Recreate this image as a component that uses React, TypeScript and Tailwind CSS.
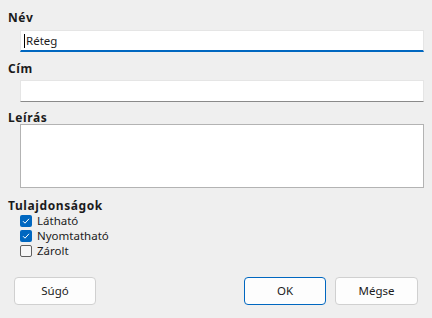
import React from "react";

const Check = ({ checked }: { checked: boolean }) =>
  checked ? (
    <span className="w-[12px] h-[12px] rounded-[2px] bg-[#0067c0] flex items-center justify-center">
      <svg width="8" height="8" viewBox="0 0 8 8" fill="none">
        <path d="M1 4.2 L3 6.2 L7 1.8" stroke="#ffffff" strokeWidth="1" />
      </svg>
    </span>
  ) : (
    <span className="w-[12px] h-[12px] rounded-[2px] border border-[#5f5f5f] bg-[#f7f7f7]" />
  );

export default function App() {
  return (
    <div
      className="w-[432px] h-[318px] bg-[#efefef] text-[#1b1b1b] text-[11.5px] flex flex-col px-[8px] overflow-hidden"
      style={{ fontFamily: '"Noto Sans", sans-serif' }}
    >
      <div className="mt-[12px] h-[12px] leading-[12px] text-[12px] tracking-[0.6px] font-bold">Név</div>
      <div className="mt-[6px] ml-[12px] w-[404px] h-[22px] bg-white border border-[#e5e5e5] border-b-2 border-b-[#0067c0] flex items-center pl-[3px]">
        <span className="w-px h-[14px] bg-black mr-[1px]" />
        <span>Réteg</span>
      </div>
      <div className="mt-[11px] h-[12px] leading-[12px] text-[12px] tracking-[0.6px] font-bold">Cím</div>
      <div className="mt-[5px] ml-[12px] w-[404px] h-[22px] bg-white border border-[#e5e5e5] border-b-[#8a8a8a]" />
      <div className="mt-[10px] h-[12px] leading-[12px] text-[12px] tracking-[0.6px] font-bold">Leírás</div>
      <div className="ml-[12px] w-[404px] h-[64px] bg-white border border-[#b3b3b3]" />
      <div className="mt-[12px] h-[12px] leading-[12px] text-[12px] tracking-[0.6px] font-bold">Tulajdonságok</div>
      <div className="mt-[1px] ml-[12px] flex flex-col">
        {[
          ["Látható", true],
          ["Nyomtatható", true],
          ["Zárolt", false],
        ].map(([label, checked]) => (
          <div key={label as string} className="h-[15px] flex items-center gap-[5px]">
            <Check checked={checked as boolean} />
            <span className="leading-[14px]">{label as string}</span>
          </div>
        ))}
      </div>
      <div className="mt-[19px] flex items-center pl-[6px] pr-[6px]">
        <button className="w-[82px] h-[28px] rounded-[4px] bg-[#fdfdfd] border border-[#d0d0d0]">
          Súgó
        </button>
        <div className="flex-1" />
        <button className="w-[82px] h-[28px] rounded-[4px] bg-[#fdfdfd] border border-[#0067c0]">
          OK
        </button>
        <button className="ml-[9px] w-[83px] h-[28px] rounded-[4px] bg-[#fdfdfd] border border-[#d0d0d0]">
          Mégse
        </button>
      </div>
    </div>
  );
}
